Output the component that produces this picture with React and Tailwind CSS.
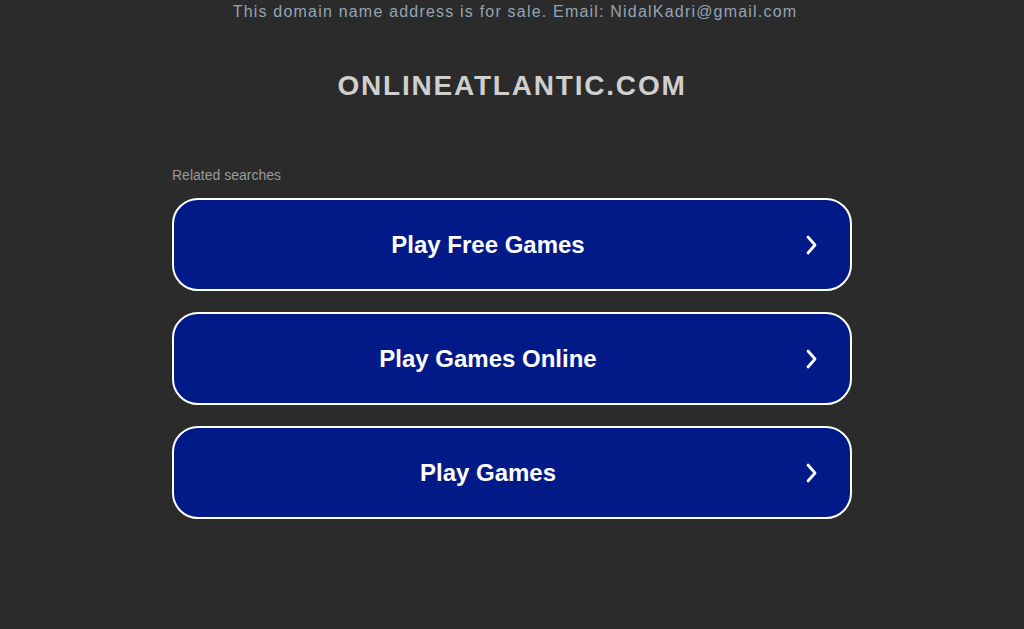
import React from "react";

const items = ["Play Free Games", "Play Games Online", "Play Games"];

function Chevron() {
  return (
    <svg width="14" height="22" viewBox="0 0 14 22" fill="none" stroke="white" strokeWidth="2.8" strokeLinecap="round" strokeLinejoin="round">
      <path d="M4 3 L11 11 L4 19" />
    </svg>
  );
}

export default function App() {
  return (
    <div className="min-h-[629px] w-full bg-[#2b2b2b] flex flex-col items-center" style={{ fontFamily: '"Liberation Sans", Arial, sans-serif' }}>
      <div className="pt-[2px] pl-[6px] text-[16px] leading-[20px] tracking-[1.2px] text-[#94a3b5]">
        This domain name address is for sale. Email: NidalKadri@gmail.com
      </div>
      <h1 className="mt-[48px] text-[28px] leading-[32px] font-bold tracking-[1.8px] text-[#cfcfcf]">ONLINEATLANTIC.COM</h1>
      <div className="mt-[65px] w-[680px]">
        <div className="text-[14px] leading-[16px] text-[#9a9a9a]">Related searches</div>
        <div className="mt-[15px] flex flex-col gap-[21px]">
          {items.map((t) => (
            <div key={t} className="h-[93px] rounded-[26px] border-2 border-white bg-[#021a87] flex items-center pr-[32px]">
              <div className="flex-1 pr-[2px] text-center text-[24px] font-bold text-white">{t}</div>
              <Chevron />
            </div>
          ))}
        </div>
      </div>
    </div>
  );
}
